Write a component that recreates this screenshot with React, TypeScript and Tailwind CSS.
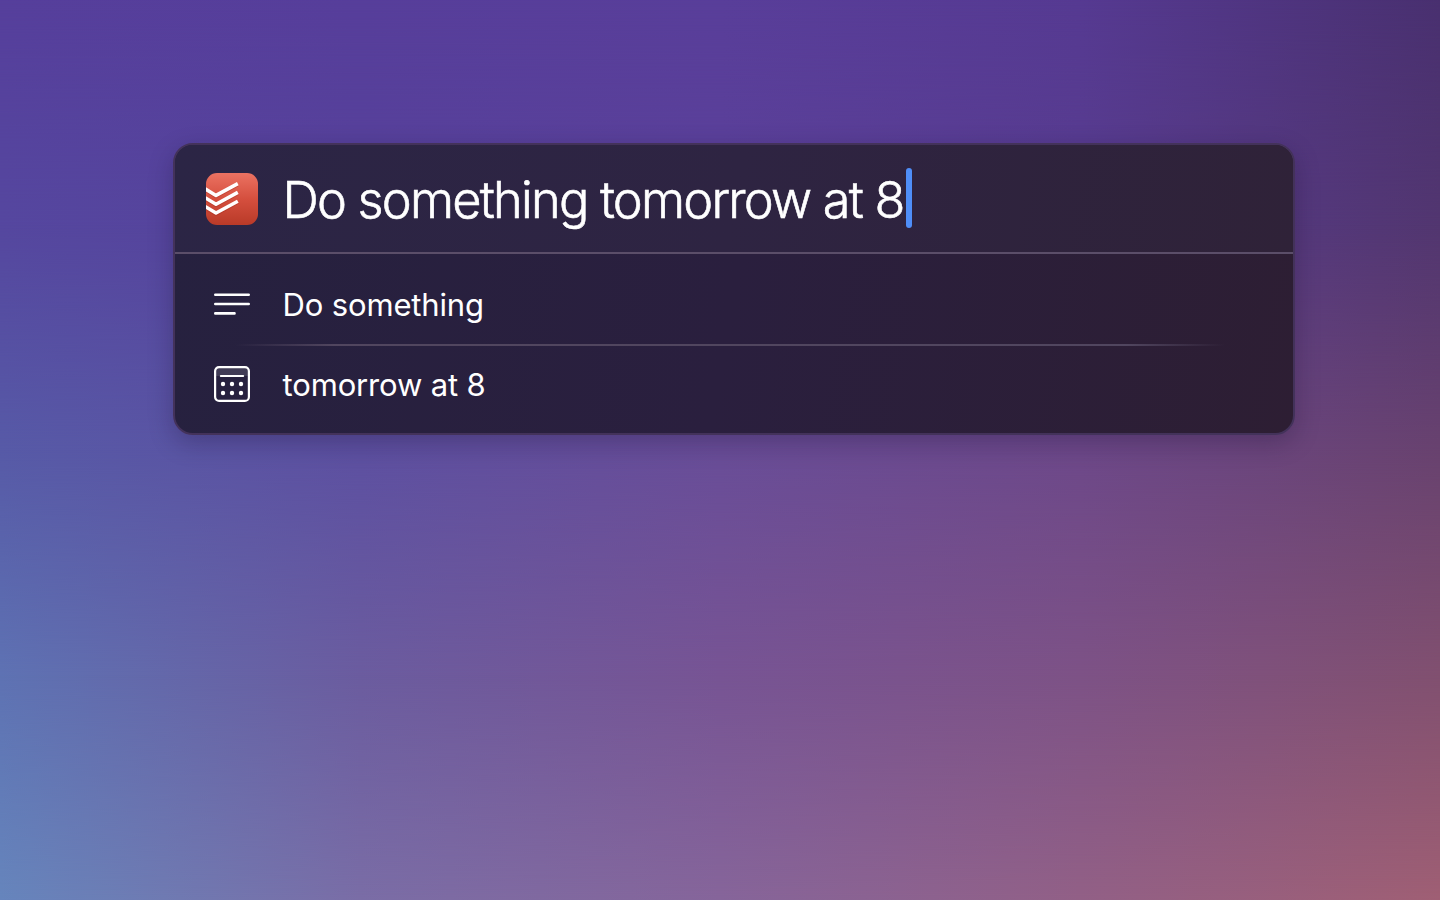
const layers = [
  "bg-[linear-gradient(to_right,#563f9c_0%,#573e9b_25%,#593e9a_50%,#563a92_75%,#493070_100%)]",
  "bg-[linear-gradient(to_right,#55479f_0%,#56429b_25%,#5b419a_50%,#583c8f_75%,#523670_100%)] [mask-image:linear-gradient(to_bottom,transparent_0%,black_25%)]",
  "bg-[linear-gradient(to_right,#575aa7_0%,#5d50a1_25%,#694d98_50%,#6d4889_75%,#68426f_100%)] [mask-image:linear-gradient(to_bottom,transparent_25%,black_50%)]",
  "bg-[linear-gradient(to_right,#5e72b3_0%,#6b5c9f_25%,#775494_50%,#7d5286_75%,#815070_100%)] [mask-image:linear-gradient(to_bottom,transparent_50%,black_75%)]",
  "bg-[linear-gradient(to_right,#6685bc_0%,#7a6da6_25%,#86659a_50%,#926086_75%,#9f5f74_100%)] [mask-image:linear-gradient(to_bottom,transparent_75%,black_100%)]",
];

function AppLogo() {
  return (
    <svg className="size-[52px] shrink-0" viewBox="0 0 52 52" fill="none">
      <defs>
        <linearGradient id="red" x1="26" y1="0" x2="26" y2="52" gradientUnits="userSpaceOnUse">
          <stop stopColor="#eb7262" />
          <stop offset="0.5" stopColor="#d54f3e" />
          <stop offset="1" stopColor="#b93a28" />
        </linearGradient>
        <clipPath id="tile">
          <rect width="52" height="52" rx="11" />
        </clipPath>
      </defs>
      <g clipPath="url(#tile)">
        <rect width="52" height="52" fill="url(#red)" />
        <g stroke="#a83022" strokeOpacity="0.45" strokeWidth="3.8" strokeLinejoin="round" transform="translate(0 1)">
          <path d="M-3 14.6L10 22.4L31.8 10.6" />
          <path d="M-3 23.4L10 31.2L31.8 19.4" />
          <path d="M-3 32.2L10 40L31.8 28.2" />
        </g>
        <g stroke="#fff" strokeWidth="3.5" strokeLinejoin="round">
          <path d="M-3 14.6L10 22.4L31.8 10.6" />
          <path d="M-3 23.4L10 31.2L31.8 19.4" />
          <path d="M-3 32.2L10 40L31.8 28.2" />
        </g>
      </g>
    </svg>
  );
}

function LinesIcon() {
  return (
    <svg className="size-9 shrink-0" viewBox="0 0 36 36" fill="none" stroke="#fff" strokeWidth="2.6" strokeLinecap="round">
      <path d="M1.3 8.7H34.7M1.3 18H34.7M1.3 27.4H20.5" />
    </svg>
  );
}

function CalendarIcon() {
  const dots = [9, 18, 27];
  return (
    <svg className="size-9 shrink-0" viewBox="0 0 36 36" fill="none">
      <path d="M2 10V5a3 3 0 0 1 3-3h26a3 3 0 0 1 3 3v5z" fill="#fff" fillOpacity="0.12" />
      <rect x="1.1" y="1.1" width="33.8" height="33.8" rx="4" stroke="#fff" strokeWidth="2.2" />
      <path d="M6.9 10H29.1" stroke="#fff" strokeWidth="2.2" strokeLinecap="round" />
      {dots.map((x) => (
        <g key={x} fill="#fff">
          <circle cx={x} cy="18" r="2.2" />
          <circle cx={x} cy="27" r="2.2" />
        </g>
      ))}
    </svg>
  );
}

export default function App() {
  return (
    <main className="relative h-[900px] w-[1440px] overflow-hidden font-['Inter',sans-serif] text-white">
      {layers.map((layer) => (
        <div key={layer} className={`absolute inset-0 ${layer}`} />
      ))}
      <div className="relative pt-[143px] pl-[173px]">
        <section className="flex h-[292px] w-[1122px] flex-col overflow-hidden rounded-[20px] border-2 border-[#43325a] bg-[linear-gradient(100deg,#26213f_0%,#2a1f3e_50%,#2d1e33_100%)] bg-origin-border shadow-[0_8px_24px_rgba(20,10,40,0.26)]">
          <header className="flex h-[109px] shrink-0 items-center border-b-2 border-[#5b4e69] bg-[linear-gradient(100deg,#2b2545_0%,#2e2442_50%,#2f2238_100%)] pl-[31px]">
            <AppLogo />
            <span className="ml-[24.5px] pt-[2px] text-[50.5px] font-light leading-[60px] tracking-[-1.79px] whitespace-nowrap [-webkit-text-stroke:0.6px_white]">Do something tomorrow at 8</span>
            <span className="mb-[2px] ml-[2px] h-[60px] w-[6px] rounded-full bg-[#4f8ef8]" />
          </header>
          <div className="flex h-[90px] items-end pl-[39px]">
            <div className="flex h-20 items-center gap-[32.5px]">
              <LinesIcon />
              <span className="pt-[2px] text-[31px] leading-10 tracking-[-0.15px] whitespace-nowrap">Do something</span>
            </div>
          </div>
          <div className="mr-[68px] ml-[60px] h-[2px] shrink-0 bg-[linear-gradient(to_right,transparent,#51465f_10%,#51465f_90%,transparent)]" />
          <div className="flex h-[76px] items-center gap-[32.5px] pl-[39px]">
            <CalendarIcon />
            <span className="pt-[2px] text-[31px] leading-10 tracking-[-0.15px] whitespace-nowrap">tomorrow at 8</span>
          </div>
        </section>
      </div>
    </main>
  );
}
